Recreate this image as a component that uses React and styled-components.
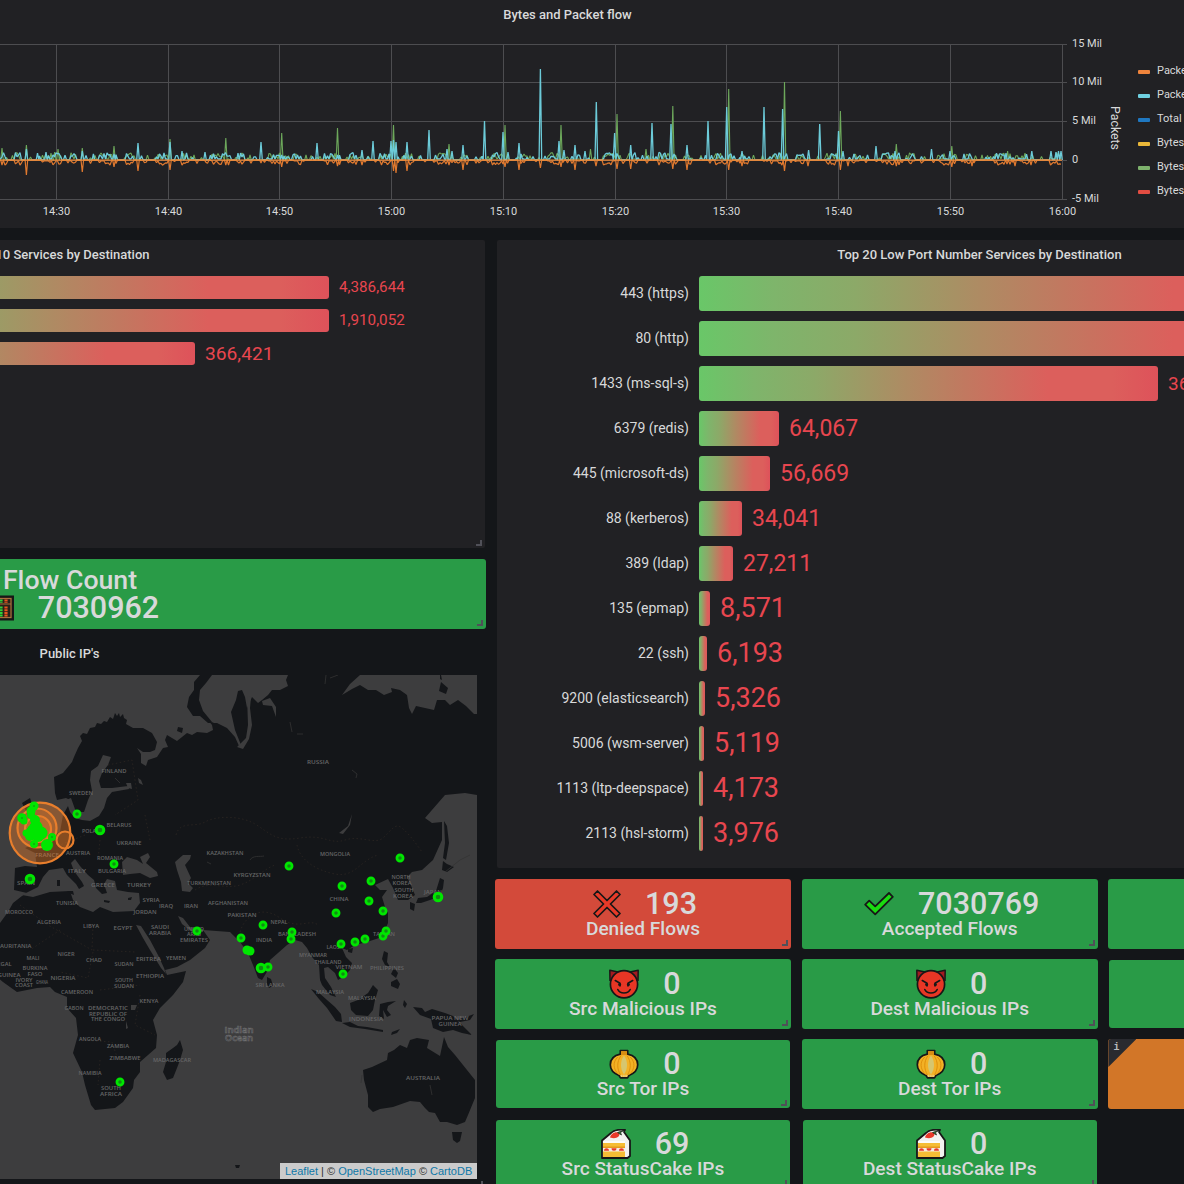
import React from "react";
import styled, { createGlobalStyle } from "styled-components";

const GlobalStyle = createGlobalStyle`
  * { box-sizing: border-box; }
  html, body { margin: 0; padding: 0; background: #141619; }
  body { font-family: Roboto, "Liberation Sans", sans-serif; color: #d8d9da; overflow: hidden; }
`;

const Page = styled.div`
  width: 1184px;
  height: 1184px;
  overflow: hidden;
  display: flex;
  flex-direction: column;
  gap: 12px;
  background: #141619;
`;

const PanelTitle = styled.h2`
  margin: 0;
  height: 29px;
  line-height: 29px;
  padding-left: ${(p) => p.$shift || 0}px;
  font-size: 13px;
  font-weight: 500;
  text-align: center;
  white-space: nowrap;
`;

const FlowPanel = styled.section`
  flex: none;
  height: 228px;
  background: #212124;
`;

const FlowTitle = styled(PanelTitle)`
  width: 1135px;
`;

const FlowBody = styled.div`
  display: flex;
  height: 199px;
  svg { flex: none; }
`;

const Legend = styled.ul`
  list-style: none;
  margin: 0;
  padding: 29px 0 0 10px;
  display: flex;
  flex-direction: column;
  white-space: nowrap;
`;

const LegendItem = styled.li`
  display: flex;
  align-items: center;
  gap: 7px;
  height: 24px;
  font-size: 11px;
`;

const Swatch = styled.span`
  flex: none;
  width: 12px;
  height: 4px;
  margin-top: 4px;
  border-radius: 1px;
  background: ${(p) => p.$color};
`;

const Columns = styled.div`
  display: flex;
  flex: none;
  height: 944px;
`;

const LeftColumn = styled.div`
  flex: none;
  width: 833px;
  margin-left: -347px;
  display: flex;
  flex-direction: column;
`;

const RightColumn = styled.div`
  flex: none;
  width: 976px;
  padding-left: 9px;
  display: flex;
  flex-direction: column;
  gap: 11px;
`;

const Panel = styled.section`
  position: relative;
  flex: none;
  width: ${(p) => p.$width}px;
  height: ${(p) => p.$height}px;
  margin-left: ${(p) => p.$indent || 0}px;
  background: #212124;
  border-radius: 2px;
`;

const BarList = styled.div`
  display: flex;
  flex-direction: column;
  gap: 10px;
  padding: 7px 0 0 ${(p) => p.$start}px;
`;

const BarRow = styled.div`
  display: flex;
  align-items: center;
  height: ${(p) => p.$height}px;
`;

const BarLabel = styled.span`
  width: 192px;
  margin-right: 10px;
  padding-bottom: 2px;
  text-align: right;
  font-size: 14px;
  white-space: nowrap;
`;

const Bar = styled.span`
  flex: none;
  height: 100%;
  border-radius: 3px;
  background: linear-gradient(90deg, #69c768 0%, #7eb56b 12%, #8ca968 25%, #ae8b63 45%, #dc5f5c 76%, #dc5f5c 90%, #de525a 100%);
`;

const BarValue = styled.span`
  margin-left: 10px;
  padding-bottom: ${(p) => (p.$size < 16 ? 2 : 1)}px;
  color: #e8464f;
  font-size: ${(p) => p.$size}px;
  white-space: nowrap;
`;

const Handle = styled.i`
  position: absolute;
  right: 3px;
  bottom: ${(p) => p.$bottom ?? 3}px;
  width: 6px;
  height: 6px;
  border-right: 2px solid #505058;
  border-bottom: 2px solid #505058;
`;

const TileGrid = styled.div`
  display: grid;
  grid-template-columns: 296px 296px 296px;
  grid-auto-rows: 70px;
  column-gap: 10.7px;
  row-gap: 10px;
`;

const Tile = styled.div`
  position: relative;
  overflow: hidden;
  display: flex;
  flex-direction: column;
  flex: none;
  align-items: center;
  margin: ${(p) => (p.$inset ? 1 : 0)}px;
  padding-top: ${(p) => (p.$inset ? 9 : 10)}px;
  border-radius: 3px;
  background: ${(p) => p.$color};
`;

const CountTile = styled(Tile)`
  width: 833px;
  height: 70px;
  margin-top: 11px;
  padding-top: 6px;
`;

const TileValue = styled.div`
  display: flex;
  align-items: center;
  gap: 24px;
  height: 30px;
  margin-left: 4px;
  font-size: 30.5px;
  line-height: 30px;
  font-weight: 500;
  white-space: nowrap;
`;

const TileLabel = styled.div`
  height: 20px;
  line-height: 20px;
  font-size: 19.1px;
  font-weight: 500;
  white-space: nowrap;
`;

const CountLabel = styled.div`
  height: 28px;
  line-height: 30px;
  padding-left: 1px;
  font-size: 26.7px;
  font-weight: 500;
`;

const InfoCorner = styled.span`
  position: absolute;
  left: 0;
  top: 0;
  width: 28px;
  height: 28px;
  padding: 3px 0 0 5px;
  clip-path: polygon(0 0, 100% 0, 0 100%);
  background: #292a2f;
  color: #b9babd;
  font: bold 10px "Liberation Mono", monospace;
`;

const MapPanel = styled.section`
  position: relative;
  height: 555px;
  padding-right: 9px;
`;

const MapTitle = styled(PanelTitle)`
  height: 46px;
  line-height: 49px;
  padding-left: 9px;
`;

const MapFrame = styled.div`
  position: relative;
  width: 477px;
  height: 504px;
  margin-left: auto;
  svg { display: block; }
`;

const Attribution = styled.div`
  position: absolute;
  right: 0;
  bottom: 0;
  width: 197px;
  height: 16px;
  padding-left: 5px;
  line-height: 16px;
  background: #cbcbcb;
  color: #333;
  font-family: "Liberation Sans", Arial, sans-serif;
  font-size: 11px;
  white-space: nowrap;
  b { font-weight: 400; color: #0f78a8; }
`;

/* ---------- time series ---------- */

const ZERO = 160;
const XT = [56.5, 168.5, 279.5, 391.5, 503.5, 615.5, 726.5, 838.5, 950.5, 1062.5];
const TIMES = ["14:30", "14:40", "14:50", "15:00", "15:10", "15:20", "15:30", "15:40", "15:50", "16:00"];
const YT = [[44.5, "15 Mil"], [82.5, "10 Mil"], [121.5, "5 Mil"], [160.5, "0"], [199.5, "-5 Mil"]];

const bytesPeaks = [[2, 148], [26.4, 145], [51, 153], [54.7, 152], [58, 149], [82.3, 148], [114, 146], [170, 139], [194, 155], [225.8, 138], [250, 155], [281.7, 133], [306, 155], [337.5, 128], [393.5, 125], [449, 144], [505, 125], [561, 125], [590.5, 149], [617, 114], [646, 149], [672.8, 106], [728.7, 89], [784.5, 82], [840.4, 111], [896.3, 144], [951.8, 146], [982, 155], [1007.6, 151]];
const packetPeaks = [[26.4, 149], [37.5, 153], [46, 152], [82.3, 151], [93.4, 154], [114, 154], [138, 143], [170, 142], [182, 151], [205, 152], [238, 153], [261, 142], [281.7, 155], [317, 143], [337.5, 155], [362, 150], [373, 141], [391, 141], [393.5, 140], [396, 142], [407, 142], [429, 130], [447, 149], [452, 151], [463, 145], [484.5, 121], [503, 132], [508, 152], [519, 143], [540.4, 69], [559, 141], [564, 150], [575, 145], [585, 151], [596.3, 102], [614.6, 133], [630.7, 145], [652, 123], [671, 124], [687, 145], [708, 121], [726.7, 107], [742, 151], [764, 107], [782.6, 109], [808.6, 150], [819.7, 124], [838.5, 131], [843, 151], [876, 146], [895, 151], [931.5, 149], [950, 151], [964, 154], [1006, 153], [1031.8, 151], [1051, 151], [1056, 152], [1058.5, 151], [1061, 151]];
const dips = [[2, 165], [26.4, 175], [82.3, 172], [114, 167], [138, 171], [170, 170], [225.8, 165], [261, 163], [281.7, 167], [337.5, 166], [362, 165], [393.5, 171], [396, 173], [407, 171], [449, 165], [463, 170], [505, 167], [519, 170], [540.4, 168], [561, 167], [575, 170], [596, 166], [617, 169], [630.7, 169], [672.8, 169], [687, 170], [728.7, 170], [742, 166], [784.5, 171], [808, 166], [840.4, 170], [848, 166], [896.3, 166], [951.8, 167], [972, 166], [1015, 166], [1007, 164], [1031, 165]];

function randomFrom(seed) {
  let s = seed;
  return () => {
    s = (s * 16807) % 2147483647;
    return s / 2147483647;
  };
}

function series(seed, peaks, sign, base) {
  const rnd = randomFrom(seed);
  const pts = [];
  for (let x = -1; x < 1062; x += 1.5) {
    const phase = (((x - 44) % 55.9) + 55.9) % 55.9;
    const busy = phase < 17 || (phase > 26 && phase < 33);
    const r = rnd();
    let h = 0.2;
    if (busy) h = r > 0.4 ? r * 8 * base : 1;
    else if (r > 0.82) h = (r - 0.72) * 20 * base;
    if (!peaks.some((p) => Math.abs(p[0] - x) < 2)) pts.push([x, ZERO - sign * h]);
  }
  peaks.forEach(([x, y]) => pts.push([x - 1.3, ZERO], [x, y], [x + 1.3, ZERO]));
  pts.sort((a, b) => a[0] - b[0]);
  return "M" + pts.map((p) => `${p[0].toFixed(1)} ${p[1].toFixed(1)}`).join("L");
}

const GREEN_LINE = series(77, bytesPeaks, 1, 0.9);
const CYAN_LINE = series(1234, packetPeaks, 1, 0.95);
const ORANGE_LINE = series(991, dips, -1, 0.65);

function FlowChart() {
  return (
    <svg width="1128" height="199" viewBox="0 29 1128 199" fontFamily="Roboto, sans-serif" fontSize="11" fill="#d8d9da">
      <g stroke="#4d4d50" strokeWidth="1">
        {YT.map(([y]) => <line key={y} x1="0" x2="1067" y1={y} y2={y} />)}
        {XT.map((x) => <line key={x} x1={x} x2={x} y1="44" y2="199" />)}
      </g>
      <g fill="none" strokeLinejoin="bevel">
        <path d={GREEN_LINE} stroke="#6da85b" strokeWidth="1.1" />
        <path d={CYAN_LINE} stroke="#6ccbd9" strokeWidth="1.3" />
        <path d={ORANGE_LINE} stroke="#e0792f" strokeWidth="1.2" />
        <line x1="0" x2="1062" y1="160.2" y2="160.2" stroke="#ef8b3a" strokeWidth="1.3" />
      </g>
      {YT.map(([y, t]) => <text key={t} x="1072" y={y + 2.8}>{t}</text>)}
      {XT.map((x, i) => <text key={x} x={x} y="215" textAnchor="middle">{TIMES[i]}</text>)}
      <text transform="translate(1111 128) rotate(90)" textAnchor="middle" fontSize="12.3">Packets</text>
    </svg>
  );
}

/* ---------- world map ---------- */

const SEA = "#3d3d3e";
const poly = (s) => "M" + s + "Z";
const LAND = [
  // Eurasia and Africa
  "-5 930 0 923 8 912 13 903 22 896 27 893 14 890 15 868 25 866 37 867 35 853 25 848 40 842 60 832 63 815 68 806 70 800 66 798 57 800 55 793 54 777 63 773 72 762 74 757 78 748 82 741 80 736 83 733 87 734 90 728 95 727 97 723 101 724 104 721 107 722 110 717 113 719 115 713 117 716 119 713 120 717 123 714 124 718 127 720 126 724 133 728 143 728 152 733 157 742 155 750 150 752 143 752 137 748 141 754 141 763 146 766 148 760 157 757 163 748 168 747 165 740 167 735 172 738 177 741 187 733 192 735 197 732 207 733 213 730 212 725 208 720 214 723 217 723 227 728 235 737 239 746 241 745 235 730 231 712 236 700 238 691 242 690 245 697 247 708 252 697 258 703 262 700 268 695 272 690 280 690 288 686 286 680 288 675 360 675 350 684 342 695 352 689 360 685 368 690 376 690 384 695 392 692 391 688 400 690 407 695 409 708 412 714 416 706 425 708 434 710 437 700 445 700 450 705 458 700 466 706 474 714 477 714 477 795 465 793 445 795 425 818 432 823 442 822 442 840 433 860 422 870 412 872 407 877 410 883 415 895 408 900 398 900 393 888 388 879 375 885 380 890 387 890 382 897 385 907 388 913 388 923 382 937 367 942 355 945 347 950 342 948 346 957 352 963 350 970 343 977 338 980 335 973 328 967 324 968 325 978 331 987 336 997 330 995 322 985 320 980 319 965 312 957 307 948 302 942 295 940 287 945 278 953 270 960 268 970 262 980 258 978 253 965 248 953 240 942 230 932 203 930 210 940 205 948 190 960 177 967 165 970 167 975 186 971 183 982 173 995 160 1008 153 1020 157 1035 156 1048 140 1062 140 1072 134 1080 133 1088 123 1102 115 1108 95 1110 91 1105 85 1085 82 1072 73 1053 78 1035 76 1018 67 1008 67 997 55 992 50 987 37 988 17 992 3 982 -5 975",
  // Novaya Zemlya
  "200 675 212 675 206 683 200 690 199 700 203 711 212 722 208 723 200 716 193 716 187 707 189 697 194 690 194 682",
  // Arctic islands
  "178 727 183 728 182 733 177 731", "441 682 448 688 446 694 439 691", "440 675 441 675 442 680 440 679",
  // Scotland
  "22 803 30 798 34 810 28 815",
  // Sri Lanka, Madagascar
  "267 977 271 979 273 986 269 988 267 984",
  "180 1040 183 1050 180 1060 177 1068 173 1078 167 1080 163 1072 166 1062 166 1053 173 1048 177 1045",
  // Japan and Sakhalin
  "443 861 447 864 454 867 447 872 442 870", "440 878 444 880 443 888 440 896 430 900 421 903 416 903 418 898 427 897 436 891", "410 902 415 904 414 911 410 909", "444 821 447 826 449 843 446 860 443 858 445 843",
  // Philippines, Hainan
  "384 951 388 953 387 962 390 967 385 965 382 959", "391 982 397 979 400 984 398 989 391 986", "394 968 398 973 396 978 391 974", "348 949 353 948 352 953 348 952",
  // Indonesia
  "311 989 318 992 327 1000 335 1007 341 1014 342 1022 336 1021 327 1008 319 999", "342 1023 350 1022 358 1026 367 1027 383 1030 383 1032 365 1029 350 1027",
  "350 1003 358 1000 368 993 373 985 378 990 375 1000 373 1010 368 1016 356 1015 351 1010", "380 1004 388 1002 396 1001 388 1006 387 1010 391 1015 387 1017 383 1010 384 1019 379 1016",
  "392 1032 400 1029 397 1033 391 1035", "404 1000 407 1004 405 1008 403 1005",
  "413 1007 422 1008 425 1012 432 1009 445 1013 453 1016 461 1024 472 1035 462 1033 453 1030 443 1032 433 1028 431 1019 420 1015", "457 1020 466 1017 474 1014 470 1020 460 1022",
  // Australia and Tasmania
  "363 1070 372 1067 387 1060 388 1053 394 1050 400 1045 407 1048 410 1040 417 1038 429 1040 427 1048 440 1056 444 1037 448 1047 455 1055 463 1065 475 1080 475 1098 468 1115 465 1122 457 1125 447 1122 440 1122 435 1113 429 1112 425 1108 420 1102 410 1101 393 1107 380 1109 373 1112 368 1107 368 1095 364 1080",
  "452 1132 462 1132 460 1141 457 1143 453 1140",
  "235 1165 240 1165 239 1168 236 1168",
];

const WATER = [
  // Mediterranean with the Adriatic and Aegean
  "22 895 38 887 43 877 49 870 56 869 63 868 67 875 76 884 79 889 84 886 82 882 74 871 71 863 75 859 80 866 88 875 94 880 96 888 102 894 107 893 104 884 107 879 115 881 117 890 128 892 139 893 140 903 134 911 113 912 100 907 93 912 80 907 73 900 70 891 50 892 33 897",
  // Black Sea
  "123 875 122 862 127 857 137 860 143 864 140 857 148 853 150 857 146 863 157 872 158 876 150 878 140 873 130 874",
  // Caspian
  "175 862 183 855 191 855 190 859 185 865 191 878 188 883 193 888 190 892 182 891 181 882 177 870",
  // Baltic and Kattegat
  "103 755 111 757 108 765 102 773 99 781 101 788 112 788 128 786 129 789 112 792 107 798 104 808 99 816 90 821 82 820 75 818 70 812 66 800 71 798 76 812 84 812 88 800 92 791 90 780 91 771 98 766",
  // Red Sea, Persian Gulf, Gulf of Ob
  "136 925 141 926 150 940 158 955 164 968 166 974 161 968 150 950 143 938", "178 916 183 918 190 927 203 929 203 932 192 932 182 924",
  "247 696 251 697 250 708 252 725 249 739 243 749 237 747 246 738 248 725",
  "262 701 270 698 276 707 276 717 272 706 263 705",
  // Lakes
  "131 1005 137 1005 135 1010 131 1010", "126 1021 128 1028 126 1029", "339 833 348 826 352 814 350 825 343 834", "126 783 131 783 132 789 128 788", "138 778 141 780 143 785 139 783",
];

const ISLANDS_IN_MED = ["67 891 73 891 74 895 69 893", "57 880 60 880 60 886 57 886", "104 900 110 901 109 903 104 902", "128 898 132 897 131 900 128 900"];

const LABELS = [
  ["FINLAND", 114, 773, 25], ["SWEDEN", 81, 795, 24], ["BELARUS", 119, 827, 25], ["POLAND", 93, 833, 22], ["UKRAINE", 129, 845, 25], ["AUSTRIA", 78, 855, 24], ["FRANCE", 47, 857, 24], ["ROMANIA", 110, 860, 26], ["ITALY", 77, 873, 18], ["BULGARIA", 112, 873, 28], ["GREECE", 103, 887, 24], ["TURKEY", 139, 887, 24], ["SPAIN", 26, 885, 18], ["TUNISIA", 67, 905, 22], ["MOROCCO", 19, 914, 28], ["ALGERIA", 49, 924, 24], ["LIBYA", 91, 928, 16], ["EGYPT", 123, 930, 19], ["SYRIA", 151, 902, 17], ["JORDAN", 145, 914, 23], ["IRAQ", 166, 908, 14], ["IRAN", 191, 908, 14],
  ["KAZAKHSTAN", 225, 855, 37], ["TURKMENISTAN", 209, 885, 44], ["KYRGYZSTAN", 252, 877, 37], ["AFGHANISTAN", 228, 905, 40], ["PAKISTAN", 242, 917, 29], ["RUSSIA", 318, 764, 22], ["MONGOLIA", 335, 856, 30], ["CHINA", 339, 901, 19], ["NEPAL", 279, 924, 17], ["NORTH", 401, 879, 19], ["KOREA", 402, 884.5, 19], ["SOUTH", 404, 892, 19], ["KOREA", 403, 898, 20], ["JAPAN", 433, 894, 18],
  ["SAUDI", 160, 929, 18], ["ARABIA", 160, 935, 22], ["UNITED", 194, 930.5, 20], ["ARAB", 194, 936, 14], ["EMIRATES", 194, 942, 28], ["YEMEN", 176, 960, 20], ["ERITREA", 148.500, 961, 25], ["ETHIOPIA", 150, 978, 28], ["SUDAN", 124, 966, 19], ["SOUTH", 124, 982, 18], ["SUDAN", 124, 987.5, 20], ["CHAD", 94, 962, 16], ["NIGER", 66, 956, 17], ["NIGERIA", 63, 980, 25], ["MALI", 33, 960, 13], ["MAURITANIA", 13, 948, 37], ["BURKINA", 35, 970, 25], ["FASO", 35, 975.5, 15], ["IVORY", 24, 981.5, 17], ["COAST", 24, 987, 18], ["GHANA", 42, 984, 12], ["GUINEA", 9, 977, 23], ["SENEGAL", -1, 966, 25], ["CAMEROON", 77, 994, 32], ["GABON", 74, 1010, 19], ["DEMOCRATIC", 108, 1010, 40], ["REPUBLIC OF", 108, 1015.5, 38], ["THE CONGO", 108, 1021, 34], ["KENYA", 149, 1003, 19], ["ANGOLA", 90, 1041, 22], ["ZAMBIA", 118, 1048, 22], ["ZIMBABWE", 125, 1060, 31], ["MADAGASCAR", 172, 1062, 38], ["NAMIBIA", 90, 1075, 23], ["SOUTH", 111, 1090, 20], ["AFRICA", 111, 1096, 22],
  ["INDIA", 264, 942, 16], ["BANGLADESH", 297, 936, 38], ["MYANMAR", 313, 957, 28], ["LAOS", 333, 949, 13], ["THAILAND", 328, 963.5, 27], ["VIETNAM", 349, 969, 27], ["PHILIPPINES", 387, 970, 34], ["SRI LANKA", 270, 987, 29], ["MALAYSIA", 330, 994, 28], ["MALAYSIA", 362, 1000, 28], ["INDONESIA", 366, 1021, 34], ["PAPUA NEW", 450, 1020, 37], ["GUINEA", 450, 1026, 23], ["AUSTRALIA", 423, 1080, 34], ["TAIWAN", 384, 936, 22],
];

const HOSTS = [[77, 814], [100, 830, 1], [114, 864], [30, 879, 1], [289, 866], [400, 858], [342, 886], [371, 881], [369, 901], [336, 913], [383, 911], [438, 897, 1], [263, 925], [197, 931], [241, 938], [261, 968, 1], [268, 967], [291, 939], [292, 932], [341, 944], [355, 942], [365, 939], [383, 936], [386, 931], [343, 974], [120, 1082]];
const CLUSTER = [[247, 950, 4.5], [250, 951, 4.5], [34, 806, 4.5], [31, 811, 4.5], [31, 815, 4], [22, 818, 4.8], [24, 821, 3.5], [35, 820, 5], [36, 827, 6.5], [33, 831, 6.5], [26, 833, 3.5], [41, 833, 6.5], [38, 836, 6], [30, 836, 5], [47, 845, 6], [52, 837, 4], [34, 844, 4]];

function WorldMap() {
  return (
    <svg width="477" height="504" viewBox="0 675 477 504">
      <rect x="0" y="675" width="477" height="504" fill={SEA} />
      <path d={LAND.map(poly).join("")} fill="#141619" />
      <path d={WATER.map(poly).join("")} fill={SEA} />
      <path d={ISLANDS_IN_MED.map(poly).join("")} fill="#141619" />
      <g fill="none" stroke="#2c2622" strokeWidth="0.8" strokeDasharray="1.5 2.5">
        <path d="M176 835C180 820 195 828 205 822S240 815 255 824S275 842 300 838S330 845 345 840S375 845 383 838S395 822 402 828S415 842 422 852" />
        <path d="M297 845C300 860 315 870 335 874S360 860 378 855M195 890C210 880 225 890 240 885S262 870 275 865M240 932C245 915 262 905 280 918S310 918 318 925" />
        <path d="M20 905L48 925L92 950L93 925M60 930L30 950M93 950L135 952M93 952L88 978L60 972M100 990L140 985M80 1040L112 1042L118 1060M100 1060L98 1085M140 995L135 1025L155 1035M108 765L132 760L138 800L115 815M145 815L150 840M85 835L60 845M100 840L98 860" />
      </g>
      <g fill="none" stroke="#343434" strokeWidth="0.8">
        <path d="M326 675L325 684M330 678L338 675M290 722L292 732M297 734H303M352 770L357 774L356 778M445 872L460 860L470 855M207 862L211 864M115 778L120 783M430 1085L432 1095M362 1075L361 1083M250 860C253 855 260 857 264 856" />
      </g>
      <g fill="#666667" fontSize="5.2" fontWeight="600" fontFamily="'Open Sans', sans-serif" textAnchor="middle">
        {LABELS.map(([t, x, y, w]) => <text key={t + x + y} x={x} y={y} textLength={w} lengthAdjust="spacingAndGlyphs">{t}</text>)}
      </g>
      <g fill="#242426" stroke="#707072" strokeWidth="0.6" fontSize="8.4" fontWeight="600" fontFamily="'Open Sans', sans-serif" textAnchor="middle">
        <text x="239" y="1032.600" textLength="29" lengthAdjust="spacingAndGlyphs">Indian</text>
        <text x="239" y="1041.200" textLength="28" lengthAdjust="spacingAndGlyphs">Ocean</text>
      </g>
      <g stroke="#e87e2c" strokeWidth="2.2" fill="#ec7d28" fillOpacity="0.42">
        <circle cx="40" cy="833" r="30.3" />
        <circle cx="37" cy="828" r="19.5" fillOpacity="0.3" />
        <circle cx="38" cy="829" r="13" fillOpacity="0.3" />
        <circle cx="65" cy="840" r="8.5" fillOpacity="0.2" />
      </g>
      {CLUSTER.map(([x, y, r]) => <circle key={`${x}-${y}`} cx={x} cy={y} r={r} fill="#00e600" />)}
      {[[22, 818], [34, 806], [52, 837], [34, 844]].map(([x, y]) => <circle key={`${x}.${y}`} cx={x} cy={y} r="1" fill="#12a512" />)}
      {HOSTS.map(([x, y, big]) => (
        <circle key={`${x}-${y}`} cx={x} cy={y} r={big ? 3.8 : 3.1} fill="#128a14" stroke="#00e600" strokeWidth={big ? 3 : 2.7} />
      ))}
    </svg>
  );
}

/* ---------- tile icons ---------- */

const INK = "#171717";

function Cross() {
  return (
    <svg width="28" height="30" viewBox="0 0 28 30">
      <path d="M4.500 2L14 11.500 23.500 2 27 5.500 17.500 15 27 24.500 23.500 28 14 18.500 4.500 28 1 24.500 10.500 15 1 5.500Z" fill="#e83a28" stroke={INK} strokeWidth="1.700" strokeLinejoin="round" />
    </svg>
  );
}

function Check() {
  return (
    <svg width="30" height="30" viewBox="0 0 30 30">
      <path d="M1.200 15.600L5.200 11.600 11.200 17.400 25 4 28.800 7.800 11.200 25.400Z" fill="#19dc0f" stroke={INK} strokeWidth="1.800" strokeLinejoin="round" />
    </svg>
  );
}

function Devil() {
  return (
    <svg width="30" height="30" viewBox="0 0 30 30">
      <path d="M1 12L.8 1.200 9 3M29 12L29.200 1.200 21 3" fill="#a31a20" stroke={INK} strokeWidth="1.500" strokeLinejoin="round" />
      <circle cx="15" cy="15.200" r="13.600" fill="#e83625" stroke={INK} strokeWidth="1.700" />
      <path d="M6.300 11.500L11 14.300V17M23.700 11.500L19 14.300V17" fill="none" stroke={INK} strokeWidth="1.600" strokeLinecap="round" strokeLinejoin="round" />
      <circle cx="10.600" cy="15.500" r="1.500" fill={INK} />
      <circle cx="19.400" cy="15.500" r="1.500" fill={INK} />
      <path d="M8.800 20.500C11 25.200 19 25.200 21.200 20.500" fill="none" stroke={INK} strokeWidth="1.600" strokeLinecap="round" />
    </svg>
  );
}

function Onion() {
  return (
    <svg width="30" height="30" viewBox="0 0 30 30">
      <path d="M11.300 1.500H18.700V5.200C25 6.500 28.700 10.500 28.700 15.800C28.700 21 25 24.500 20 26.500L18.500 28.800H11.500L10 26.500C5 24.500 1.300 21 1.300 15.800C1.300 10.500 5 6.500 11.300 5.200Z" fill="#f3b125" stroke={INK} strokeWidth="1.700" strokeLinejoin="round" />
      <path d="M12 2.300H18V6H12Z" fill="#d98d12" />
      <path d="M8.800 8C3.500 13 4 20 9.500 25.500M21.200 8C26.500 13 26 20 20.500 25.500M12 6.500C7.500 13 8 20 11.500 26M18 6.500C22.500 13 22 20 18.500 26" fill="none" stroke="#dc8c0a" strokeWidth="0.900" />
      <path d="M15 6.500C19 12 19 20 15 25.500C11 20 11 12 15 6.500Z" fill="#d6c66f" />
      <path d="M12.300 25.800V28M14.200 25.800V28M16 25.800V28M17.800 25.800V28" stroke="#e8dca8" strokeWidth="0.800" />
    </svg>
  );
}

function Cake() {
  return (
    <svg width="30" height="30" viewBox="0 0 30 30">
      <path d="M1 29V11.500L10 4C13 .8 18 .3 24 .8L23 3 29 11.500V27L26.500 29Z" fill="#f2f2f0" stroke={INK} strokeWidth="1.800" strokeLinejoin="round" />
      <path d="M2 13.500H24V28H2Z" fill="#f5bd35" />
      <path d="M2 12H24V14H2Z" fill="#fbfbf8" />
      <path d="M2 17.500H24V19H2Z" fill="#e59a1c" />
      <path d="M2 19H24V22.500H2Z" fill="#f6ece0" />
      <path d="M3 21.800a2.500 2.500 0 0 1 5 0ZM10.500 19.200h5a2.500 2.500 0 0 1 -5 0ZM18 21.800a2.500 2.500 0 0 1 5 0Z" fill="#e8392a" />
      <path d="M9 8.500C10 4.500 14.500 2 18.500 4C19 8 15 10.500 9 8.500Z" fill="#e8392a" />
      <path d="M16.500 3.500L24 .8 19.500 3.500 20.500 6Z" fill="#2f8a35" stroke={INK} strokeWidth="0.700" />
    </svg>
  );
}

function Abacus() {
  return (
    <svg width="30" height="30" viewBox="0 0 30 30">
      <rect x="1" y="3.500" width="28" height="23" fill="#2a2118" stroke={INK} strokeWidth="2" />
      <rect x="3" y="5.500" width="24" height="19" fill="none" stroke="#a8713d" strokeWidth="1.200" />
      <path d="M3 11H27" stroke="#a8713d" strokeWidth="1.200" />
      {[7, 12, 17, 22].map((x, i) => (
        <path key={x} d={`M${x} 6.500V10M${x} 13.500V24`} stroke={i === 3 || i === 0 ? "#e8541f" : "#2fd03a"} strokeWidth="3.200" strokeDasharray="2 .7" />
      ))}
    </svg>
  );
}

/* ---------- data ---------- */

const GREEN = "#299b47";
const TILES = [
  { icon: Cross, value: "193", label: "Denied Flows", color: "#d34a3a" },
  { icon: Check, value: "7030769", label: "Accepted Flows" },
  {},
  { icon: Devil, value: "0", label: "Src Malicious IPs" },
  { icon: Devil, value: "0", label: "Dest Malicious IPs" },
  { inset: true },
  { icon: Onion, value: "0", label: "Src Tor IPs", inset: true },
  { icon: Onion, value: "0", label: "Dest Tor IPs" },
  { color: "#d27628", info: true },
  { icon: Cake, value: "69", label: "Src StatusCake IPs", inset: true },
  { icon: Cake, value: "0", label: "Dest StatusCake IPs", inset: true },
];

const SERVICES = [
  { value: "4,386,644", width: 504, size: 15.2 },
  { value: "1,910,052", width: 504, size: 15.2 },
  { value: "366,421", width: 370, size: 19.2 },
];

const PORTS = [
  { label: "443 (https)", width: 624, value: "", size: 19 },
  { label: "80 (http)", width: 624, value: "", size: 19 },
  { label: "1433 (ms-sql-s)", width: 459, value: "366,421", size: 19 },
  { label: "6379 (redis)", width: 80, value: "64,067", size: 23 },
  { label: "445 (microsoft-ds)", width: 71, value: "56,669", size: 23 },
  { label: "88 (kerberos)", width: 43, value: "34,041", size: 23 },
  { label: "389 (ldap)", width: 34, value: "27,211", size: 23 },
  { label: "135 (epmap)", width: 11, value: "8,571", size: 27 },
  { label: "22 (ssh)", width: 8, value: "6,193", size: 27 },
  { label: "9200 (elasticsearch)", width: 6, value: "5,326", size: 27 },
  { label: "5006 (wsm-server)", width: 5, value: "5,119", size: 27 },
  { label: "1113 (ltp-deepspace)", width: 4, value: "4,173", size: 27 },
  { label: "2113 (hsl-storm)", width: 4, value: "3,976", size: 27 },
];

const LEGEND = [["Packets", "#ef843c"], ["Packets", "#6ed0e0"], ["Total", "#1f78c1"], ["Bytes", "#eab839"], ["Bytes", "#7eb26d"], ["Bytes", "#e24d42"]];

export default function App() {
  return (
    <Page>
      <GlobalStyle />
      <FlowPanel>
        <FlowTitle>Bytes and Packet flow</FlowTitle>
        <FlowBody>
          <FlowChart />
          <Legend>
            {LEGEND.map(([name, color]) => (
              <LegendItem key={color}><Swatch $color={color} />{name}</LegendItem>
            ))}
          </Legend>
        </FlowBody>
      </FlowPanel>
      <Columns>
        <LeftColumn>
          <Panel $width={832} $height={308}>
            <PanelTitle $shift={7}>10 Services by Destination</PanelTitle>
            <BarList $start={172}>
              {SERVICES.map((s) => (
                <BarRow key={s.value} $height={23}>
                  <Bar style={{ width: s.width }} />
                  <BarValue $size={s.size}>{s.value}</BarValue>
                </BarRow>
              ))}
            </BarList>
            <Handle $bottom={2} />
          </Panel>
          <CountTile $color={GREEN}>
            <CountLabel>Flow Count</CountLabel>
            <TileValue><Abacus />7030962</TileValue>
            <Handle />
          </CountTile>
          <MapPanel>
            <MapTitle>Public IP's</MapTitle>
            <MapFrame>
              <WorldMap />
              <Attribution><b>Leaflet</b> | © <b>OpenStreetMap</b> © <b>CartoDB</b></Attribution>
            </MapFrame>
            <Handle $bottom={-3} />
          </MapPanel>
        </LeftColumn>
        <RightColumn>
          <Panel $width={965} $height={628} $indent={2}>
            <PanelTitle>Top 20 Low Port Number Services by Destination</PanelTitle>
            <BarList $start={0}>
              {PORTS.map((p) => (
                <BarRow key={p.label} $height={35}>
                  <BarLabel>{p.label}</BarLabel>
                  <Bar style={{ width: p.width }} />
                  {p.value && <BarValue $size={p.size}>{p.value}</BarValue>}
                </BarRow>
              ))}
            </BarList>
          </Panel>
          <TileGrid>
            {TILES.map((t, i) => (
              <Tile key={i} $color={t.color || GREEN} $inset={t.inset}>
                {t.info && <InfoCorner>i</InfoCorner>}
                {t.icon && <TileValue><t.icon />{t.value}</TileValue>}
                {t.label && <TileLabel>{t.label}</TileLabel>}
                <Handle $bottom={t.inset ? 2 : 3} />
              </Tile>
            ))}
          </TileGrid>
        </RightColumn>
      </Columns>
    </Page>
  );
}
